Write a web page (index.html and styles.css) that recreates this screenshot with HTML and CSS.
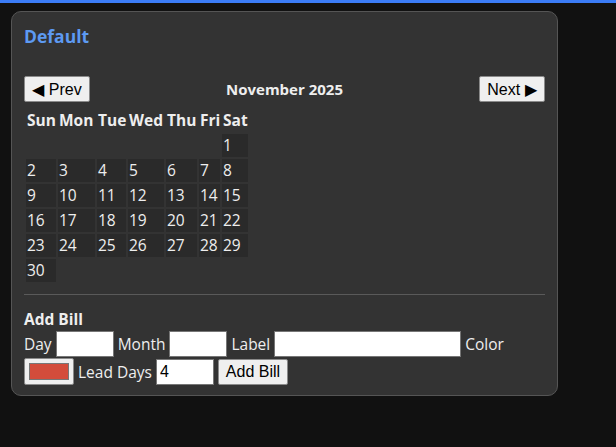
FILE: index.html
```html
<!DOCTYPE html>
<html>
<head>
<meta charset="utf-8">
<link rel="stylesheet" href="styles.css">
</head>
<body>
<div class="wrap">
  <div class="card">
    <h2 class="title">Default</h2>
    <div class="nav">
      <button class="btn">◀ Prev</button>
      <div class="month">November 2025</div>
      <button class="btn">Next ▶</button>
    </div>
    <table class="cal">
      <colgroup>
        <col class="c-sun"><col class="c-mon"><col class="c-tue"><col class="c-wed"><col class="c-thu"><col class="c-fri"><col class="c-sat">
      </colgroup>
      <thead>
        <tr><th>Sun</th><th>Mon</th><th>Tue</th><th>Wed</th><th>Thu</th><th>Fri</th><th>Sat</th></tr>
      </thead>
      <tbody>
        <tr><td class="empty"></td><td class="empty"></td><td class="empty"></td><td class="empty"></td><td class="empty"></td><td class="empty"></td><td>1</td></tr>
        <tr><td>2</td><td>3</td><td>4</td><td>5</td><td>6</td><td>7</td><td>8</td></tr>
        <tr><td>9</td><td>10</td><td>11</td><td>12</td><td>13</td><td>14</td><td>15</td></tr>
        <tr><td>16</td><td>17</td><td>18</td><td>19</td><td>20</td><td>21</td><td>22</td></tr>
        <tr><td>23</td><td>24</td><td>25</td><td>26</td><td>27</td><td>28</td><td>29</td></tr>
        <tr><td>30</td><td class="empty"></td><td class="empty"></td><td class="empty"></td><td class="empty"></td><td class="empty"></td><td class="empty"></td></tr>
      </tbody>
    </table>
    <hr class="sep">
    <div class="add-title">Add Bill</div>
    <div class="row">
      <span>Day</span><input class="inp small" type="text">
      <span>Month</span><input class="inp small" type="text">
      <span>Label</span><input class="inp wide" type="text">
      <span>Color</span>
    </div>
    <div class="row last">
      <input class="color" type="color" value="#d34c3b">
      <span>Lead Days</span><input class="inp small" type="text" value="4">
      <button class="btn add">Add Bill</button>
    </div>
  </div>
</div>
</body>
</html>
```
FILE: styles.css
```css
html, body {
  margin: 0;
  background: #111111;
}
body {
  border-top: 3px solid #3b7cf6;
  font-family: "Open Sans", "Noto Sans", sans-serif;
  font-size: 15.5px;
  color: #eeeeee;
}
.wrap {
  padding: 8px 11px;
}
.card {
  width: 547px;
  box-sizing: border-box;
  border: 1px solid #555555;
  border-radius: 10px;
  background: #333333;
  padding: 12px 12px 10px;
}
.title {
  margin: 0;
  font-size: 17.5px;
  line-height: 24px;
  font-weight: 700;
  color: #5d9af2;
}
.nav {
  margin-top: 28px;
  display: flex;
  justify-content: space-between;
  align-items: center;
}
.btn {
  font-family: "Liberation Sans", Arial, sans-serif;
  font-size: 16px;
  height: 26px;
  box-sizing: border-box;
  padding: 0 6px;
  background: #efefef;
  color: #000;
  border: 1px solid #8a8a8a;
  border-radius: 2px;
}
.nav .btn {
  width: 66px;
  padding: 0;
}
.month {
  font-weight: 700;
  font-size: 15px;
}
.cal {
  margin-top: 5px;
  border-spacing: 2px;
  table-layout: fixed;
  width: 226px;
}
.c-sun { width: 30px; }
.c-mon { width: 37px; }
.c-tue { width: 29px; }
.c-wed { width: 36px; }
.c-thu { width: 31px; }
.c-fri { width: 21px; }
.c-sat { width: 26px; }
.cal th, .cal td {
  padding: 1px 1px;
  line-height: 21px;
  text-align: left;
  white-space: nowrap;
}
.cal th {
  font-weight: 700;
  font-size: 15.5px;
}
.cal td {
  background: #2a2a2a;
}
.cal td.empty {
  background: transparent;
}
.sep {
  margin: 10px 0 14px;
  border: 0;
  border-top: 1px solid #5a5a5a;
}
.add-title {
  font-weight: 700;
  line-height: 21px;
  margin-bottom: 1px;
}
.row {
  display: flex;
  align-items: center;
  gap: 4px;
  margin-bottom: 1px;
}
.row.last {
  margin-bottom: 0;
}
.inp {
  font-family: "Liberation Sans", Arial, sans-serif;
  font-size: 16px;
  height: 26px;
  box-sizing: border-box;
  border: 1px solid #767676;
  background: #fff;
  color: #000;
  padding: 1px 3px;
  margin: 0;
}
.small { width: 58px; }
.wide { width: 187px; }
.color {
  width: 50px;
  height: 27px;
  box-sizing: border-box;
  padding: 0 2px;
  margin: 0;
  background: #efefef;
  border: 1px solid #8a8a8a;
  border-radius: 2px;
}
.add {
  width: 70px;
}
```
